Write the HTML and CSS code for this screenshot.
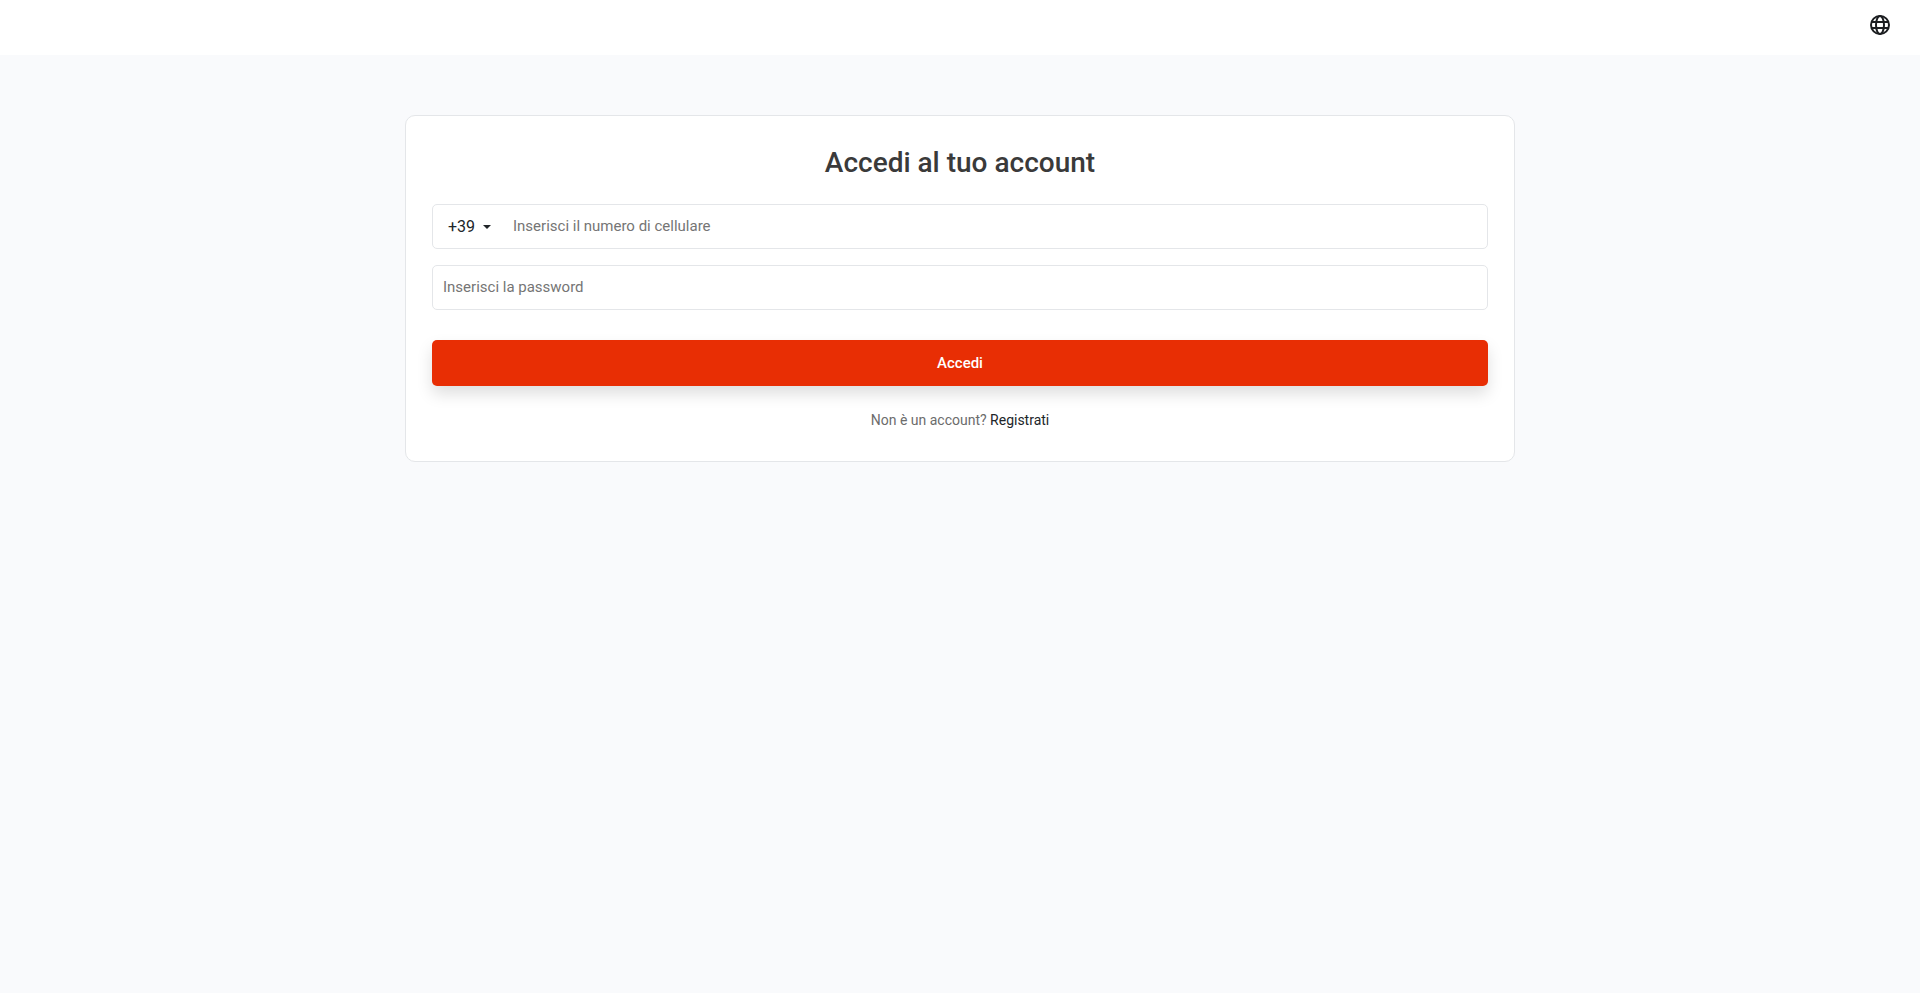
FILE: index.html
```html
<!DOCTYPE html>
<html lang="it">
<head>
<meta charset="utf-8">
<title>Accedi</title>
<link rel="stylesheet" href="styles.css">
</head>
<body>
<header class="topbar">
  <svg class="globe" viewBox="0 0 24 24" fill="none" stroke="currentColor" stroke-width="2" aria-hidden="true">
    <circle cx="12" cy="12" r="9"/>
    <ellipse cx="12" cy="12" rx="4" ry="9"/>
    <path d="M3.6 9h16.8M3.6 15h16.8"/>
  </svg>
</header>
<main class="page">
  <section class="card">
    <h1 class="title">Accedi al tuo account</h1>
    <div class="field phone">
      <span class="prefix">+39<span class="caret"></span></span>
      <span class="placeholder">Inserisci il numero di cellulare</span>
    </div>
    <div class="field">
      <span class="placeholder">Inserisci la password</span>
    </div>
    <button class="submit" type="button">Accedi</button>
    <p class="signup">Non è un account? <a class="signup-link" href="#">Registrati</a></p>
  </section>
</main>
</body>
</html>
```
FILE: styles.css
```css
* { box-sizing: border-box; }
html, body { margin: 0; height: 100%; }
body {
  background: #f9fafc;
  font-family: Roboto, "Liberation Sans", sans-serif;
  overflow: hidden;
}
.topbar {
  height: 55px;
  background: #fff;
  display: flex;
  justify-content: flex-end;
  padding: 13px 28px 0 0;
  color: #1c1e21;
}
.globe { width: 24px; height: 24px; display: block; }
.page { display: flex; justify-content: center; padding-top: 60px; }
.card {
  width: 1110px;
  height: 347px;
  background: #fff;
  border: 1px solid #e4e6e9;
  border-radius: 10px;
  padding: 29px 26px 0;
}
.title {
  margin: 0 0 23px;
  font-size: 28px;
  line-height: 36px;
  font-weight: 500;
  color: #3a3a3a;
  text-align: center;
}
.field {
  height: 45px;
  border: 1px solid #e4e6e9;
  border-radius: 5px;
  background: #fff;
  display: flex;
  align-items: center;
  padding: 0 10px;
  margin-bottom: 16px;
  font-size: 15px;
}
.placeholder { color: #757575; position: relative; top: -1px; }
.phone { padding-left: 15px; }
.prefix {
  display: flex;
  align-items: center;
  width: 65px;
  font-size: 16px;
  color: #212529;
}
.caret {
  width: 0;
  height: 0;
  margin-left: 8px;
  border-left: 4px solid transparent;
  border-right: 4px solid transparent;
  border-top: 4px solid #212529;
}
.submit {
  display: block;
  width: 100%;
  height: 46px;
  margin-top: 30px;
  border: 0;
  border-radius: 5px;
  background: #e82e04;
  color: #fff;
  font: 500 15px Roboto, sans-serif;
  box-shadow: 0 8px 16px rgba(0, 0, 0, .13);
}
.signup {
  margin: 24px 0 0;
  font-size: 14px;
  line-height: 21px;
  text-align: center;
  color: #6c6c6c;
}
.signup-link { color: #212529; text-decoration: none; }
```
